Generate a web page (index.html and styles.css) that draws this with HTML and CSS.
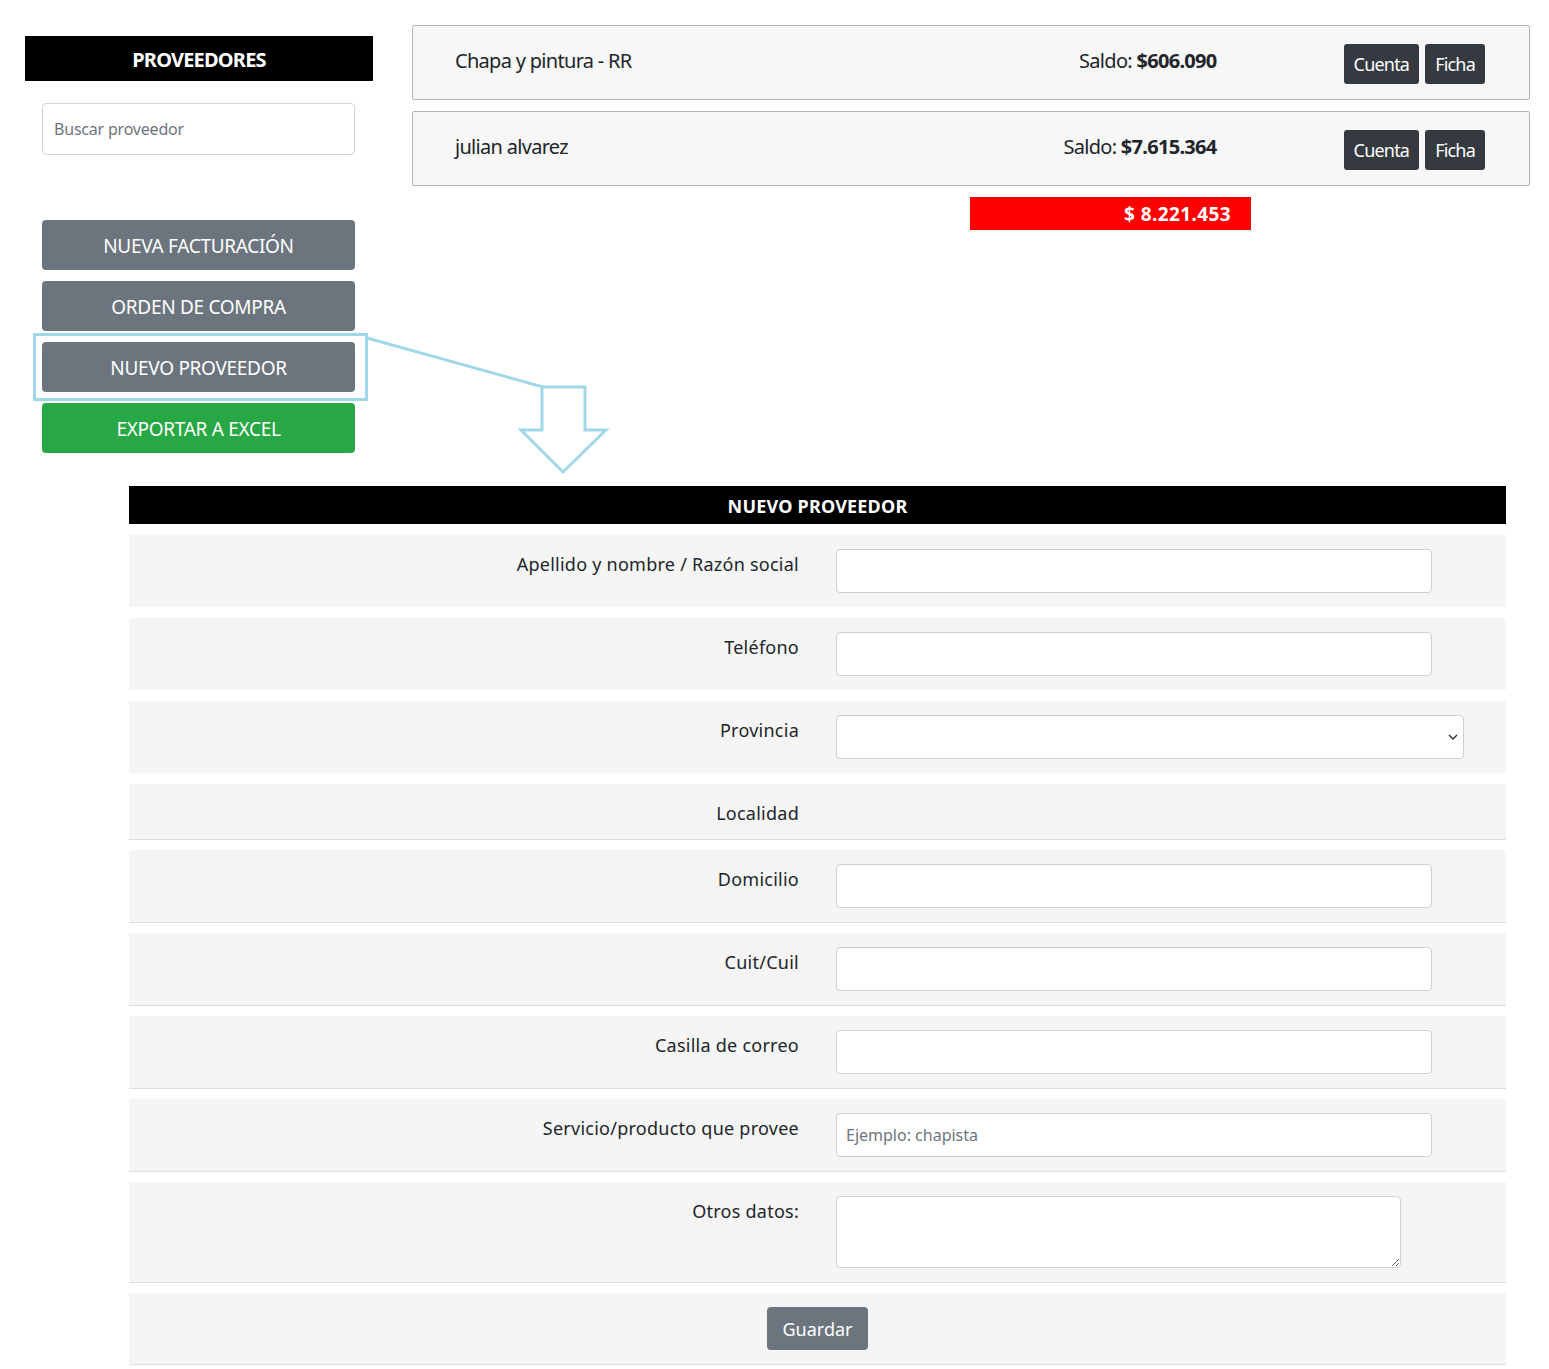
FILE: index.html
```html
<!DOCTYPE html>
<html lang="es">
  <head>
    <meta charset="UTF-8" />
    <meta name="viewport" content="width=device-width, initial-scale=1.0" />
    <title>Proveedores</title>
    <link rel="stylesheet" href="styles.css">
  </head>
  <body>
    <div class="page">
      <div class="top">
        <div class="sidebar">
          <h2 class="side-title">PROVEEDORES</h2>
          <input type="text" class="search" placeholder="Buscar proveedor" />
          <div class="side-buttons">
            <button class="side-btn">NUEVA FACTURACIÓN</button>
            <button class="side-btn">ORDEN DE COMPRA</button>
            <button class="side-btn">NUEVO PROVEEDOR</button>
            <button class="side-btn green">EXPORTAR A EXCEL</button>
          </div>
        </div>

        <div class="list">
          <div class="prov-row">
            <span class="prov-name">Chapa y pintura - RR</span>
            <span class="prov-saldo">Saldo: <b>$606.090</b></span>
            <div class="prov-actions">
              <button class="dark-btn">Cuenta</button>
              <button class="dark-btn">Ficha</button>
            </div>
          </div>
          <div class="prov-row">
            <span class="prov-name">julian alvarez</span>
            <span class="prov-saldo">Saldo: <b>$7.615.364</b></span>
            <div class="prov-actions">
              <button class="dark-btn">Cuenta</button>
              <button class="dark-btn">Ficha</button>
            </div>
          </div>
          <div class="total-wrap">
            <div class="total">$ 8.221.453</div>
          </div>
        </div>
      </div>

      <div class="form-box">
        <h3 class="form-title">NUEVO PROVEEDOR</h3>
        <div class="form-row">
          <label>Apellido y nombre / Razón social</label>
          <input type="text" class="field" />
        </div>
        <div class="form-row">
          <label>Teléfono</label>
          <input type="text" class="field" />
        </div>
        <div class="form-row">
          <label>Provincia</label>
          <div class="select-wrap">
            <select class="field wide"><option></option></select>
            <svg class="chevron" width="10" height="8" viewBox="0 0 10 8"><path d="M1 2 L5 6 L9 2" fill="none" stroke="#333" stroke-width="1.4"/></svg>
          </div>
        </div>
        <div class="form-row short lined">
          <label>Localidad</label>
        </div>
        <div class="form-row lined">
          <label>Domicilio</label>
          <input type="text" class="field" />
        </div>
        <div class="form-row lined">
          <label>Cuit/Cuil</label>
          <input type="text" class="field" />
        </div>
        <div class="form-row lined">
          <label>Casilla de correo</label>
          <input type="text" class="field" />
        </div>
        <div class="form-row lined">
          <label>Servicio/producto que provee</label>
          <input type="text" class="field" placeholder="Ejemplo: chapista" />
        </div>
        <div class="form-row lined">
          <label>Otros datos:</label>
          <textarea class="field area"></textarea>
        </div>
        <div class="form-row lined center">
          <button class="save-btn">Guardar</button>
        </div>
      </div>

      <svg class="annotation" width="620" height="480" viewBox="0 0 620 480">
        <rect x="34.5" y="334.5" width="332" height="65" fill="none" stroke="#a0d8e8" stroke-width="3"/>
        <line x1="367" y1="338" x2="543" y2="387" stroke="#a0d8e8" stroke-width="3"/>
        <polygon points="542,387 585,387 585,430 606,430 563,472 521,430 542,430" fill="none" stroke="#a0d8e8" stroke-width="3" stroke-linejoin="miter"/>
      </svg>
    </div>
  </body>
</html>
```

FILE: styles.css
```css
body {
  margin: 0;
  font-family: "Noto Sans", "Open Sans", sans-serif;
  color: #212529;
  background: #fff;
}
.page {
  position: relative;
  width: 1549px;
  padding-bottom: 4px;
}
.top {
  display: flex;
  align-items: flex-start;
}
.sidebar {
  width: 348px;
  margin-left: 25px;
  padding-top: 36px;
}
.side-title {
  margin: 0;
  height: 45px;
  line-height: 47px;
  background: #000;
  color: #fff;
  text-align: center;
  font-size: 20px;
  font-weight: 700;
  letter-spacing: -0.8px;
}
.search {
  display: block;
  box-sizing: border-box;
  width: 313px;
  height: 52px;
  margin: 22px 0 0 17px;
  padding: 0 11px;
  border: 1px solid #d3d3d3;
  border-radius: 4px;
  font-family: inherit;
  font-size: 16px;
  letter-spacing: -0.2px;
}
.search::placeholder {
  color: #6c757d;
}
.side-buttons {
  display: flex;
  flex-direction: column;
  gap: 11px;
  margin: 65px 0 0 17px;
  width: 313px;
}
.side-btn {
  height: 50px;
  padding-top: 2px;
  border: none;
  border-radius: 4px;
  background: #6c757d;
  color: #fff;
  font-family: inherit;
  font-size: 19px;
  letter-spacing: -0.3px;
  cursor: pointer;
}
.side-btn.green {
  background: #28a745;
}
.list {
  margin-left: 39px;
  margin-top: 25px;
  width: 1118px;
}
.prov-row {
  box-sizing: border-box;
  display: flex;
  align-items: center;
  height: 75px;
  margin-bottom: 11px;
  padding: 0 44px 0 42px;
  background: #f7f7f7;
  border: 1px solid #b5b5b5;
  border-radius: 2px;
}
.prov-name {
  flex: 1;
  font-size: 20px;
  letter-spacing: -0.7px;
  margin-top: -4px;
}
.prov-saldo {
  font-size: 20px;
  letter-spacing: -0.7px;
  margin-top: -4px;
}
.prov-actions {
  display: flex;
  gap: 6px;
  margin-left: 127px;
  margin-top: 2px;
}
.dark-btn {
  height: 40px;
  padding: 0 10px;
  border: none;
  border-radius: 3px;
  background: #343a40;
  color: #fff;
  font-family: inherit;
  font-size: 18px;
  letter-spacing: -0.8px;
}
.total-wrap {
  display: flex;
  padding-left: 558px;
}
.total {
  box-sizing: border-box;
  width: 281px;
  height: 33px;
  line-height: 35px;
  padding-right: 20px;
  background: #ff0000;
  color: #fff;
  font-size: 19px;
  font-weight: 700;
  text-align: right;
  letter-spacing: 0.4px;
}
.form-box {
  width: 1377px;
  margin: 33px 0 0 129px;
}
.form-title {
  margin: 0 0 11px;
  height: 38px;
  line-height: 41px;
  background: #000;
  color: #fff;
  text-align: center;
  font-size: 18px;
  font-weight: 700;
  letter-spacing: 0.2px;
}
.form-row {
  display: grid;
  grid-template-columns: 670px auto;
  column-gap: 37px;
  align-items: start;
  box-sizing: border-box;
  padding: 14px 0;
  margin-bottom: 11px;
  background: #f5f5f5;
}
.form-row.lined {
  border-bottom: 1px solid #dcdcdc;
  margin-bottom: 10px;
}
.form-row.short {
  padding: 14px 0 12px;
}
.form-row.center {
  display: flex;
  justify-content: center;
  padding: 14px 0 14px;
  margin-bottom: 0;
}
.form-row label {
  margin-top: 1px;
  text-align: right;
  font-size: 18px;
  line-height: 28px;
  letter-spacing: 0.25px;
}
.field {
  box-sizing: border-box;
  width: 596px;
  height: 44px;
  padding: 0 9px;
  border: 1px solid #cfcfcf;
  border-radius: 4px;
  background: #fff;
  font-family: inherit;
  font-size: 16px;
  letter-spacing: 0;
}
.field::placeholder {
  color: #6c757d;
}
.select-wrap {
  position: relative;
  width: 628px;
}
.field.wide {
  width: 628px;
  appearance: none;
  -webkit-appearance: none;
}
.chevron {
  position: absolute;
  right: 6px;
  top: 18px;
}
.field.area {
  width: 565px;
  height: 72px;
  display: block;
  padding: 6px 9px;
}
.save-btn {
  height: 43px;
  padding: 0 15px;
  border: none;
  border-radius: 4px;
  background: #6c757d;
  color: #fff;
  font-family: inherit;
  font-size: 18px;
}
.annotation {
  position: absolute;
  left: 0;
  top: 0;
  pointer-events: none;
}
```
